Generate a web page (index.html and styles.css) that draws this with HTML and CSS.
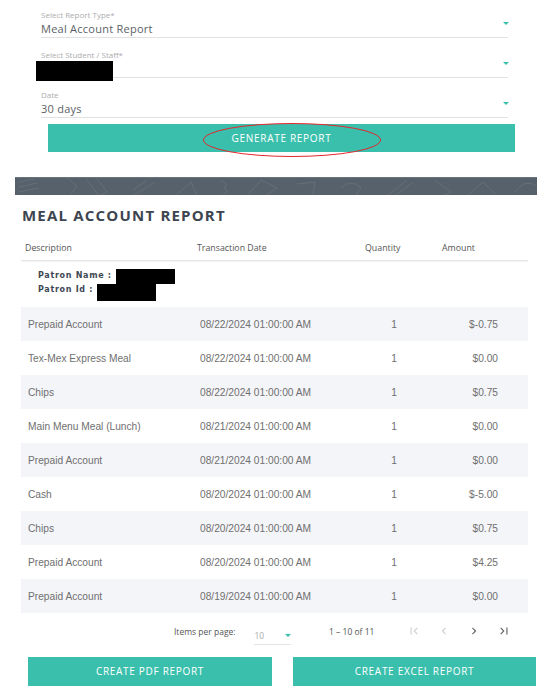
FILE: index.html
```html
<!DOCTYPE html>
<html>
<head>
<meta charset="utf-8">
<link rel="stylesheet" href="styles.css">
</head>
<body>
<div class="page">
  <div class="form">
    <div class="field">
      <div class="label">Select Report Type*</div>
      <div class="value-row"><span class="value">Meal Account Report</span><span class="caret"></span></div>
    </div>
    <div class="field">
      <div class="label">Select Student / Staff*</div>
      <div class="value-row"><span class="redact redact-student"></span><span class="caret"></span></div>
    </div>
    <div class="field">
      <div class="label">Date</div>
      <div class="value-row"><span class="value">30 days</span><span class="caret"></span></div>
    </div>
  </div>

  <div class="gen-wrap">
    <button class="btn gen-btn">GENERATE REPORT</button>
    <svg class="annot" width="180" height="36" viewBox="0 0 180 36"><ellipse cx="90" cy="18" rx="88.5" ry="16.5" fill="none" stroke="#e3262b" stroke-width="1"/></svg>
  </div>

  <div class="band">
    <svg width="522" height="18" viewBox="0 0 522 18" preserveAspectRatio="none">
      <g fill="none" stroke="rgba(255,255,255,0.09)" stroke-width="1">
        <path d="M4 4 L20 1 M4 9 L22 5 M4 14 L24 10"/>
        <path d="M50 -2 L62 8 L56 16"/>
        <path d="M72 2 L84 18 L92 14 L80 -2"/>
        <path d="M118 18 L140 4 M118 12 L132 2"/>
        <path d="M160 18 L176 4 L182 18 Z"/>
        <path d="M205 2 Q215 6 209 10 Q216 14 206 18"/>
        <path d="M232 18 L246 2 L262 10 L250 18"/>
        <path d="M282 6 L300 4 L298 18"/>
        <path d="M326 10 Q336 0 346 10 L340 18"/>
        <path d="M372 18 L392 2 M380 18 L398 4"/>
        <path d="M420 2 L436 14 L428 18"/>
        <path d="M452 18 L468 4 L480 16"/>
        <path d="M500 14 Q510 0 522 8"/>
      </g>
    </svg>
  </div>

  <div class="report">
    <h2 class="title">MEAL ACCOUNT REPORT</h2>
    <div class="grid head">
      <div class="c-desc">Description</div>
      <div class="c-date">Transaction Date</div>
      <div class="c-qty">Quantity</div>
      <div class="c-amt">Amount</div>
    </div>
    <div class="patron">
      <div class="patron-line"><span class="patron-key">Patron Name :</span><span class="redact redact-name"></span></div>
      <div class="patron-line"><span class="patron-key">Patron Id :</span><span class="redact redact-id"></span></div>
    </div>
    <div class="rows">
      <div class="grid row shade"><div class="c-desc">Prepaid Account</div><div class="c-date">08/22/2024 01:00:00 AM</div><div class="c-qty">1</div><div class="c-amt">$-0.75</div></div>
      <div class="grid row"><div class="c-desc">Tex-Mex Express Meal</div><div class="c-date">08/22/2024 01:00:00 AM</div><div class="c-qty">1</div><div class="c-amt">$0.00</div></div>
      <div class="grid row shade"><div class="c-desc">Chips</div><div class="c-date">08/22/2024 01:00:00 AM</div><div class="c-qty">1</div><div class="c-amt">$0.75</div></div>
      <div class="grid row"><div class="c-desc">Main Menu Meal (Lunch)</div><div class="c-date">08/21/2024 01:00:00 AM</div><div class="c-qty">1</div><div class="c-amt">$0.00</div></div>
      <div class="grid row shade"><div class="c-desc">Prepaid Account</div><div class="c-date">08/21/2024 01:00:00 AM</div><div class="c-qty">1</div><div class="c-amt">$0.00</div></div>
      <div class="grid row"><div class="c-desc">Cash</div><div class="c-date">08/20/2024 01:00:00 AM</div><div class="c-qty">1</div><div class="c-amt">$-5.00</div></div>
      <div class="grid row shade"><div class="c-desc">Chips</div><div class="c-date">08/20/2024 01:00:00 AM</div><div class="c-qty">1</div><div class="c-amt">$0.75</div></div>
      <div class="grid row"><div class="c-desc">Prepaid Account</div><div class="c-date">08/20/2024 01:00:00 AM</div><div class="c-qty">1</div><div class="c-amt">$4.25</div></div>
      <div class="grid row shade"><div class="c-desc">Prepaid Account</div><div class="c-date">08/19/2024 01:00:00 AM</div><div class="c-qty">1</div><div class="c-amt">$0.00</div></div>
    </div>
  </div>

  <div class="paginator">
    <span class="pg-label">Items per page:</span>
    <span class="pg-select"><span class="pg-val">10</span><span class="caret"></span></span>
    <span class="pg-range">1 – 10 of 11</span>
    <span class="pg-btn off"><svg viewBox="0 0 24 24" width="14" height="14"><path d="M18.41 16.59L13.82 12l4.59-4.59L17 6l-6 6 6 6zM6 6h2v12H6z"/></svg></span>
    <span class="pg-btn off"><svg viewBox="0 0 24 24" width="14" height="14"><path d="M15.41 7.41L14 6l-6 6 6 6 1.41-1.41L10.83 12z"/></svg></span>
    <span class="pg-btn"><svg viewBox="0 0 24 24" width="14" height="14"><path d="M10 6L8.59 7.41 13.170 12l-4.58 4.59L10 18l6-6z"/></svg></span>
    <span class="pg-btn"><svg viewBox="0 0 24 24" width="14" height="14"><path d="M5.59 7.41L10.18 12l-4.59 4.59L7 18l6-6-6-6zM16 6h2v12h-2z"/></svg></span>
  </div>

  <div class="actions">
    <button class="btn pdf-btn">CREATE PDF REPORT</button>
    <button class="btn xls-btn">CREATE EXCEL REPORT</button>
  </div>
</div>
</body>
</html>
```

FILE: styles.css
```css
* { box-sizing: border-box; }
html, body { margin: 0; padding: 0; background: #ffffff; }
body { font-family: "Open Sans", "Liberation Sans", sans-serif; color: #555; }
.page { width: 548px; }

.form { padding: 9px 40px 0 41px; }
.field { border-bottom: 1px solid #e2e2e2; height: 29px; margin-bottom: 11px; }
.field:last-child { margin-bottom: 0; }
.label { font-size: 8px; line-height: 11px; color: #adadad; }
.value-row { display: flex; justify-content: space-between; align-items: flex-start; height: 17px; }
.value { font-size: 11px; line-height: 17px; color: #5b5f66; letter-spacing: 0.25px; }
.caret { width: 0; height: 0; border-left: 3.5px solid transparent; border-right: 3.5px solid transparent; border-top: 3.5px solid #3bbfad; margin-top: 2px; margin-right: -1px; }
.redact { display: block; background: #000; }
.redact-student { width: 77px; height: 20px; margin-left: -5px; margin-top: 0.5px; position: relative; }

.gen-wrap { position: relative; margin: 6px 33px 0 48px; }
.btn { display: flex; align-items: center; justify-content: center; border: none; background: #3bbfad; color: #ffffff; font-family: "Open Sans", "Liberation Sans", sans-serif; font-size: 10px; letter-spacing: 0.7px; padding: 0; }
.gen-btn { width: 100%; height: 27.5px; }
.annot { position: absolute; left: 154px; top: -2.5px; pointer-events: none; }

.band { margin: 25px 11px 0 15px; height: 18.5px; background: #57616b; border-top: 1px solid #6a737c; overflow: hidden; }
.band svg { display: block; }

.report { padding: 0 20px 0 21px; }
.title { margin: 10px 0 0 1px; font-size: 15px; line-height: 20px; font-weight: 700; color: #3c4550; letter-spacing: 1.2px; }
.grid { display: grid; grid-template-columns: 172px 162px 75px 98px; }
.head { height: 36px; padding-top: 17px; border-bottom: 1px solid #e6e6e6; font-size: 8.8px; line-height: 12px; color: #555; box-shadow: 0 1px 1px rgba(0,0,0,0.04); }
.head .c-desc { padding-left: 4px; }
.head .c-date { padding-left: 4px; }
.head .c-qty { padding-left: 10px; }
.head .c-amt { padding-left: 12px; }

.patron { padding: 8px 0 10px 17px; height: 46px; }
.patron-line { display: flex; align-items: flex-start; height: 14px; }
.patron-key { font-family: "DejaVu Sans", "Liberation Sans", sans-serif; font-weight: 700; font-size: 8px; line-height: 14px; letter-spacing: 0.7px; color: #3e4855; }
.redact-name { width: 59px; height: 15px; margin-left: 4px; }
.redact-id { width: 59px; height: 17px; margin-left: 4px; margin-top: 1px; }

.row { height: 34px; align-items: center; font-family: "Liberation Sans", Arial, sans-serif; font-size: 10.2px; color: #6f6f6f; }
.row.shade { background: #f4f5f9; }
.row .c-desc { padding-left: 7px; }
.row .c-date { padding-left: 7px; }
.row .c-qty { text-align: center; padding-left: 3px; }
.row .c-amt { text-align: right; padding-right: 30px; }

.paginator { display: flex; align-items: center; height: 36px; padding-left: 174px; font-size: 8.5px; color: #555; }
.pg-label { width: 80px; }
.pg-select { width: 37px; height: 18px; display: flex; justify-content: space-between; align-items: center; border-bottom: 1px solid #e2e2e2; margin-top: 9px; padding-bottom: 8px; margin-left: -0.5px; }
.pg-val { color: #aaa; padding-left: 1px; margin-top: 8px; }
.pg-select .caret { margin-top: 8px; margin-right: 0; }
.pg-range { width: 70px; margin-left: 38.5px; }
.pg-btn { width: 30px; display: flex; justify-content: center; align-items: center; }
.pg-btn svg { fill: #666; }
.pg-btn.off svg { fill: #d0d0d0; }

.actions { display: flex; gap: 21px; padding-left: 28px; margin-top: 8px; }
.pdf-btn { width: 244px; height: 28.5px; }
.xls-btn { width: 243px; height: 28.5px; }
```
